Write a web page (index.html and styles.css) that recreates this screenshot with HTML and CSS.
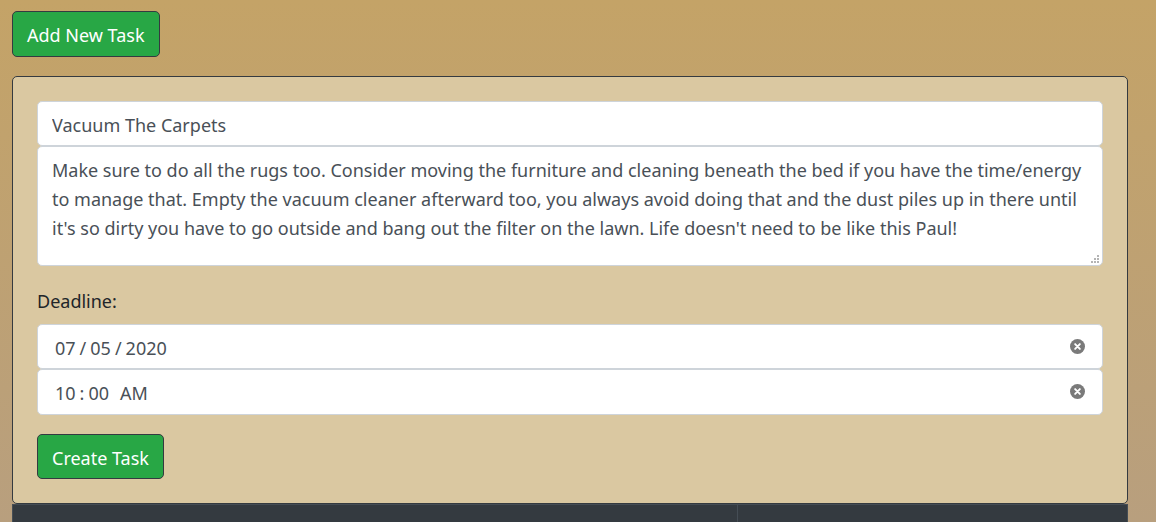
FILE: index.html
```html
<!DOCTYPE html>
<html lang="en-US">
<head>
<meta charset="utf-8">
<meta name="viewport" content="width=device-width, initial-scale=1">
<title>Tasks</title>
<link rel="stylesheet" href="styles.css">
</head>
<body>
<main class="page">
  <button class="btn" type="button">Add New Task</button>
  <form class="card">
    <input class="field" type="text" aria-label="Task" value="Vacuum The Carpets">
    <div class="field-wrap">
      <textarea class="field field-area" rows="3" aria-label="Description">Make sure to do all the rugs too. Consider moving the furniture and cleaning beneath the bed if you have the time/energy to manage that. Empty the vacuum cleaner afterward too, you always avoid doing that and the dust piles up in there until it's so dirty you have to go outside and bang out the filter on the lawn. Life doesn't need to be like this Paul!</textarea>
      <svg class="grip" width="8" height="8" viewBox="0 0 8 8" aria-hidden="true"><path fill="#b4b4b4" d="M6 0h2v2H6zM3 3h2v2H3zM6 3h2v2H6zM0 6h2v2H0zM3 6h2v2H3zM6 6h2v2H6z"/></svg>
    </div>
    <label class="label" for="date">Deadline:</label>
    <div class="field-wrap">
      <input class="field field-date" id="date" type="date" value="2020-07-05">
      <button class="clear" type="button" aria-label="Clear date"><svg width="15" height="15" viewBox="0 0 14 14"><circle cx="7" cy="7" r="7" fill="#7a7a7a"/><path d="M4.8 4.8l4.4 4.4M9.2 4.8l-4.4 4.4" stroke="#fff" stroke-width="1.8" stroke-linecap="round"/></svg></button>
    </div>
    <div class="field-wrap">
      <input class="field field-date field-time" type="time" aria-label="Deadline time" value="10:00">
      <button class="clear" type="button" aria-label="Clear time"><svg width="15" height="15" viewBox="0 0 14 14"><circle cx="7" cy="7" r="7" fill="#7a7a7a"/><path d="M4.8 4.8l4.4 4.4M9.2 4.8l-4.4 4.4" stroke="#fff" stroke-width="1.8" stroke-linecap="round"/></svg></button>
    </div>
    <button class="btn btn-create" type="submit">Create Task</button>
  </form>
  <table class="tasks">
    <thead><tr><th class="col-main"></th><th></th></tr></thead>
  </table>
</main>
</body>
</html>
```
FILE: styles.css
```css
* {
  box-sizing: border-box;
}

body {
  margin: 0;
  min-height: 100vh;
  background: linear-gradient(#c4a367, #b89f7e);
  color: #212529;
  font-family: "Segoe UI", "Noto Sans", sans-serif;
  font-size: 18px;
  line-height: 29px;
}

.page {
  padding: 11px 28px 0 12px;
}

.btn {
  display: block;
  padding: 9px 14px 6px;
  border: 1px solid #343a40;
  border-radius: 5px;
  background: #28a745;
  color: #fff;
  font: inherit;
}

.card {
  display: flex;
  flex-direction: column;
  margin-top: 19px;
  padding: 24px;
  border: 1px solid #343a40;
  border-radius: 5px;
  background: #dac8a1;
}

.field {
  display: block;
  width: 100%;
  height: 45px;
  padding: 8px 14px 6px;
  border: 1px solid #ced4da;
  border-radius: 5px;
  background: #fff;
  color: #495057;
  font: inherit;
}

.field-wrap {
  position: relative;
}

.field-area {
  height: 120px;
  padding-top: 9px;
  overflow: hidden;
  resize: none;
}

.field-date {
  padding-top: 9px;
  padding-bottom: 5px;
}

.field-time {
  height: 46px;
  padding-bottom: 6px;
}

.grip {
  position: absolute;
  right: 4px;
  bottom: 3px;
}

.label {
  margin: 21px 0 8px;
}

.field::-webkit-calendar-picker-indicator {
  display: none;
}

.field::-webkit-datetime-edit {
  padding: 0 2px;
}

.field::-webkit-datetime-edit-text {
  padding: 0 3px;
}

.clear {
  position: absolute;
  top: 15px;
  right: 18px;
  display: flex;
  padding: 0;
  border: 0;
  background: none;
}

.btn-create {
  align-self: flex-start;
  margin-top: 19px;
  padding-bottom: 5px;
}

.tasks {
  width: 100%;
  border-collapse: collapse;
  table-layout: fixed;
  background: #343a40;
}

.tasks th {
  height: 18px;
  padding: 0;
  border: 1px solid #454d55;
  border-bottom: 0;
}

.col-main {
  width: 65%;
}
```
